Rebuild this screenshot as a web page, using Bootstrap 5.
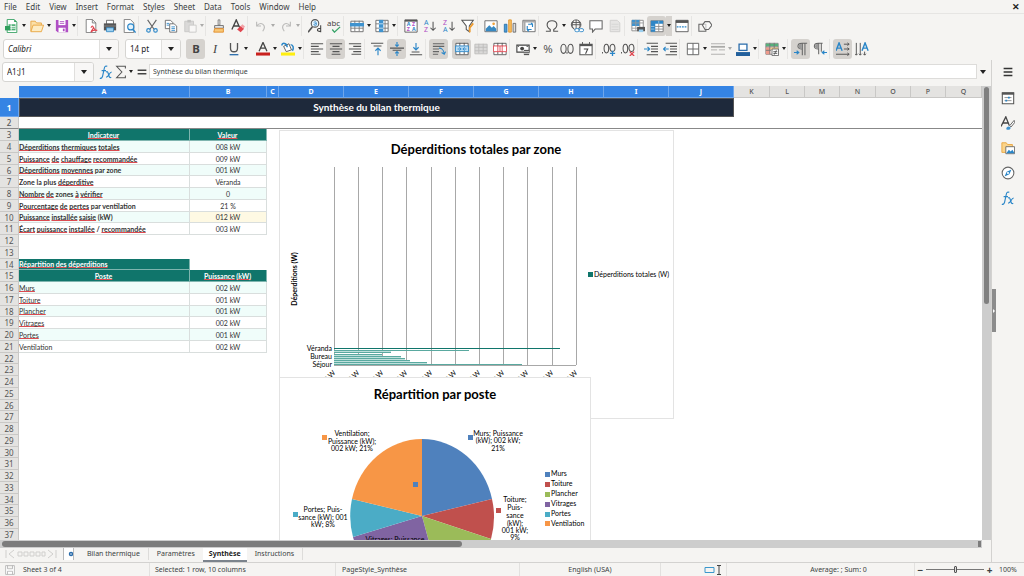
<!DOCTYPE html>
<html lang="fr">
<head>
<meta charset="utf-8">
<meta name="viewport" content="width=device-width, initial-scale=1">
<title>Bilan thermique – Synthèse</title>
<link href="https://cdn.jsdelivr.net/npm/bootstrap@5.3.0/dist/css/bootstrap.min.css" rel="stylesheet">
<script src="https://cdn.jsdelivr.net/npm/bootstrap@5.3.0/dist/js/bootstrap.bundle.min.js"></script>
<style>
  :root { --chrome:#f5f4f2; --line:#dddcda; --ink:#3b3f42; --pick:#3584e4; --teal:#10756b; --mint:#f0fdfa; }
  body { font-family:"Noto Sans",sans-serif; font-size:7px; line-height:10px; color:var(--ink); background:var(--chrome); }
  button, input { font:inherit; color:inherit; }
  svg { display:block; }

  .menubar { height:14px; font-size:8px; border-bottom:1px solid #e6e5e3; }
  .menubar .entries { gap:9px; }
  .menubar a { color:var(--ink); text-decoration:none; }
  .btn.winclose { font-size:9px; line-height:10px; color:#222; font-weight:bold; }

  .toolrow { height:23px; padding-left:2px; }
  .formatrow { padding-left:3px; }
  .btn.tool { width:19px; height:20px; padding:0; border:0; border-radius:3px; flex:none; display:flex; align-items:center; justify-content:center; }
  .btn.tool svg { width:14px; height:14px; }
  .btn.tool.active { background:#d5d2ce; }
  .btn.drop { width:6px; height:20px; padding:0; border:0; border-radius:0; flex:none; display:flex; align-items:center; justify-content:center; }
  .btn.drop::after { content:""; border:2px solid transparent; border-top:3px solid #222; border-bottom:0; }
  .btn.drop.active { background:#d5d2ce; }
  .btn:disabled { opacity:.35; border:0; }
  .rule { width:4px; height:20px; flex:none; border-left:1px solid #e6e5e3; }

  .combo { height:20px; background:#fff; border:1px solid #d6d5d2; border-radius:3px; overflow:hidden; flex:none; }
  .combo input { border:0; padding:0 4px; min-width:0; flex:1; font-size:8px; background:transparent; color:#222; }
  .combo button { width:19px; border:0; border-left:1px solid #e0dfdd; background:#f8f7f6; padding:0; display:flex; align-items:center; justify-content:center; }
  .combo button::after, .expand::after { content:""; border:3px solid transparent; border-top:4px solid #222; border-bottom:0; }
  .fontbox { width:116px; margin-right:6px; } .sizebox { width:56px; margin-right:5px; }
  .namebox { width:92px; } .namebox input { font-size:8px; }
  .formulabar { height:26px; padding:0 2px 3px 2px; }
  .formulabar .btn.tool { width:15px; }
  .formula { height:15px; border:1px solid var(--line); background:#fff; padding:0 3px; font-size:7px; min-width:0; }
  .expand { width:12px; border:0; background:none; padding:0; display:flex; justify-content:center; }
  .formulabar svg { width:12px; height:12px; }

  .sheet { background:#fff; min-height:0; overflow:hidden; }
  .grid { table-layout:fixed; border-collapse:separate; border-spacing:0; width:100%; font-family:Lato,sans-serif; font-size:7px; line-height:10px; color:#333; }
  .grid th, .grid td { padding:0 1px; overflow:hidden; white-space:nowrap; text-align:center; font-weight:normal; vertical-align:middle; }
  .grid tr { height:12px; }
  .grid .data tr:nth-child(4n) { height:11px; }
  .grid th[scope=row], .grid thead th { font-family:"Noto Sans",sans-serif; background:#e4e3e1; color:#555; border-right:1px solid #c9c8c6; border-bottom:1px solid #c9c8c6; }
  .grid th[scope=row] { font-size:8px; line-height:9px; padding:0; }
  .grid thead th { background:#e4e3e1; line-height:9px; font-weight:500; }
  .grid thead th.picked, .grid th.picked[scope=row] { background:var(--pick); color:#fff; border-color:#6ea6ec; font-weight:bold; }
  .grid thead td { background:var(--chrome); }
  .grid .titlerow { height:19px; }
  .grid .banner { background:#1e293b; color:#fff; font-size:10px; font-weight:bold; line-height:15px; border:1px solid #fff; border-top-color:#c9d8f0; outline:1px solid #555; outline-offset:-1px; }
  .grid .frozen > * { border-bottom:1px solid #888 !important; }
  .grid .lbl, .grid .val { border-right:1px solid #d9dedd; border-bottom:1px solid #d9dedd; }
  .grid .lbl, .grid .cap { padding-left:0; }
  .grid .lbl { text-align:left; font-weight:bold; }
  .grid .plain { font-weight:normal; }
  .grid .data .cap { background:var(--teal); color:#fff; font-weight:bold; border-right:1px solid #7fb5af; border-bottom:1px solid #7fb5af; }
  .grid .tint { background:var(--mint); }
  .grid .entry { background:#fef9e3; }
  .grid u { text-decoration:underline 1px #dc4a50; text-underline-offset:0; text-decoration-skip-ink:none; }

  .floatchart { position:absolute; left:279px; background:#fff; border:1px solid #e3e3e3; font-family:Lato,sans-serif; font-size:7px; }
  .zones { top:44px; } .postes { top:291px; }
  .floatchart .heading { font-size:13px; font-weight:bold; fill:#000; }

  .vscroll { width:9px; background:#cdcdcd; padding:1px 2px; }
  .vscroll div { height:48%; width:5px; background:#808080; border-radius:3px; }
  .hscroll { height:8px; background:#cdcdcd; padding:1px 1px 1px 2px; margin-right:9px; }
  .hscroll div { height:6px; background:#7c7c7c; border-radius:3px; }
  .hscroll .thumb { width:47%; } .hscroll .grip { width:3px; border-radius:0; }
  .tabs { height:14px; padding-left:5px; }
  .tabs a { color:var(--ink); text-decoration:none; padding:0 8px; line-height:12px; border-right:1px solid var(--line); }
  .tabs a.active { background:#fff; font-weight:bold; color:#222; border:0; border-bottom:2px solid #7b838c; padding:0 6px; }
  .tabs .addsheet { width:11px; height:12px; border:0; border-left:1px solid #bbb; border-right:1px solid #bbb; background:#fff; padding:0; display:flex; align-items:center; justify-content:end; margin:0 5px 0 6px; }

  .side { width:33px; border-left:1px solid #d3d2d0; padding-top:4px; position:relative; }
  .side .btn { width:20px; height:16px; padding:0; border:0; display:flex; align-items:center; justify-content:center; margin-bottom:9px; }
  .side .btn:first-child { margin-bottom:10px; }
  .side .btn svg { width:14px; height:14px; }
  .side .grabber { position:absolute; left:0; top:229px; width:4px; height:43px; background:#8c8c8c; }

  .statusbar { height:14px; border-top:1px solid #d3d2d0; line-height:13px; }
  .statusbar > div { border-right:1px solid #e2e1df; height:13px; flex:none; }
  .statusbar > div:last-child { border:0; }
  .s-sheet { width:150px; padding-left:5px; } .s-sel { width:186px; padding-left:5px; } .s-page { width:184px; padding-left:6px; }
  .s-lang { width:141px; } .statusbar > .s-mode { width:66px; padding-right:4px; } .s-zoom { width:109px; }
  .statusbar .s-sum { flex:1; padding-left:36px; }
  .zoomrange { appearance:none; width:58px; height:1px; background:#777; margin:0; }
  .zoomrange::-webkit-slider-thumb { appearance:none; width:3px; height:7px; background:#ddd; border:1px solid #555; border-radius:1px; }
  .s-zoom button { border:0; background:none; padding:0; width:11px; font-size:10px; line-height:10px; font-weight:bold; }
</style>
</head>
<body class="vh-100 overflow-hidden d-flex flex-column">

<svg width="0" height="0" class="position-absolute" aria-hidden="true">
  <defs>
    <symbol id="i-new" viewBox="0 0 16 16"><path d="M2.500.5h8l3 3v12h-11z" fill="#fff" stroke="#2e9e5b"/><path d="M10.500.5v3h3z" fill="#2e9e5b"/><path d="M4 6h8v7H4z" fill="#4cae74"/><path d="M4 8.500h8M4 10.500h8M7 6v7" stroke="#fff"/><path d="M0 8h6v5H0z" fill="#2e9e5b"/></symbol>
    <symbol id="i-open" viewBox="0 0 16 16"><path d="M1 14V2.500h5l1.500 2H13V7" fill="#fbe0a8" stroke="#e8a33d"/><path d="M1 14.500 3.500 7h12L13 14.500z" fill="#fdecc4" stroke="#e8a33d"/></symbol>
    <symbol id="i-save" viewBox="0 0 16 16"><path d="M1 1h14v14H3l-2-2z" fill="#b04fc4"/><path d="M4 1h8v6H4z" fill="#fff"/><path d="M5.500 3h5M5.500 5h5" stroke="#b04fc4"/><path d="M4 10h8v5H4z" fill="#fff"/><path d="M9 11h2v3H9z" fill="#b04fc4"/></symbol>
    <symbol id="i-pdf" viewBox="0 0 16 16"><path d="M2.500.5h7l4 4v11h-11z" fill="#fff" stroke="#777"/><path d="M9.500.5v4h4" fill="none" stroke="#777"/><path d="M8 10c3-6 2 4 7 3-5-1-6 1-7 2 1-3 3-4 3-6" fill="none" stroke="#e0454f" stroke-width="1.300"/></symbol>
    <symbol id="i-print" viewBox="0 0 16 16"><path d="M4 1.500h8V6H4z" fill="#fff" stroke="#666"/><path d="M1 5h14v8H1z" fill="#555"/><path d="M1 8h14" stroke="#888"/><path d="M4 10h8v4.500H4z" fill="#9cd0f0" stroke="#3789c2"/></symbol>
    <symbol id="i-preview" viewBox="0 0 16 16"><path d="M2.500.5h7l4 4v11h-11z" fill="#fff" stroke="#777"/><circle cx="10" cy="9" r="3.500" fill="#e3f2fb" stroke="#2a86c8" stroke-width="1.300"/><path d="m12.500 12 3 3.500" stroke="#2a86c8" stroke-width="1.500"/></symbol>
    <symbol id="i-cut" viewBox="0 0 16 16"><path d="m3 1 7.500 11M13 1 5.500 12" stroke="#666" stroke-width="1.300"/><circle cx="4" cy="13" r="2" fill="none" stroke="#2a86c8" stroke-width="1.300"/><circle cx="12" cy="13" r="2" fill="none" stroke="#2a86c8" stroke-width="1.300"/></symbol>
    <symbol id="i-copy" viewBox="0 0 16 16"><path d="M1.500 1.500h6l2.500 2.500v7H1.500z" fill="#fff" stroke="#666"/><path d="M6.500 5.500h5L14.500 8v7h-8z" fill="#fff" stroke="#666"/><path d="M3 5h3M3 7h3M8.500 9h4M8.500 11h4M8.500 13h4" stroke="#2a86c8"/></symbol>
    <symbol id="i-paste" viewBox="0 0 16 16"><path d="M2 2.500h10v12H2z" fill="#aaa" stroke="#777"/><path d="M5 1h4v3H5z" fill="#666"/><path d="M7 7h8v8H7z" fill="#fff" stroke="#777"/></symbol>
    <symbol id="i-clone" viewBox="0 0 16 16"><path d="M7 1h2v6H7z" fill="#fff" stroke="#777"/><path d="M3 7.500h10v3H3z" fill="#eee" stroke="#666"/><path d="m3 11-1 4h11V11z" fill="#f9c877" stroke="#e08a28"/></symbol>
    <symbol id="i-clear" viewBox="0 0 16 16"><path d="M1 12 6 1l4 9M3 8h6" fill="none" stroke="#444" stroke-width="1.500"/><path d="m7 12 4-4 4 3-4 4z" fill="#e0454f"/><path d="m11 8 2-2 3 2.500-2 2.500z" fill="#f3a2a7"/></symbol>
    <symbol id="i-undo" viewBox="0 0 16 16"><path d="M3 3v5h5M3 8c5-6 12-1 7 6" fill="none" stroke="#555" stroke-width="1.300"/></symbol>
    <symbol id="i-redo" viewBox="0 0 16 16"><path d="M13 3v5H8m5 0C8 2 1 7 6 14" fill="none" stroke="#555" stroke-width="1.300"/></symbol>
    <symbol id="i-find" viewBox="0 0 16 16"><circle cx="8" cy="5" r="4.300" fill="#e8f4fc" stroke="#555" stroke-width="1.200"/><path d="m5 9-5 6" stroke="#555" stroke-width="1.800"/><path d="M6.500 4c3-2 3 0 3 3-4 1-3-2 0-2" fill="none" stroke="#2a86c8"/><path d="M14.500 7v8M14.500 11c-5-1-5 4 0 3" fill="none" stroke="#444" stroke-width="1.200"/></symbol>
    <symbol id="i-spell" viewBox="0 0 16 16"><text x="0" y="8" font-size="9" fill="#444" font-family="Noto Sans">abc</text><path d="m6 12 2.500 3L15 9" fill="none" stroke="#36a367" stroke-width="1.500"/></symbol>
    <symbol id="i-row" viewBox="0 0 16 16"><path d="M1 2.500h14v12H1z" fill="#fff" stroke="#666"/><path d="M1 10.500h14M5.500 2v12M10.500 2v12" stroke="#777"/><path d="M0 4.500h16v4H0z" fill="#3f93cf"/></symbol>
    <symbol id="i-col" viewBox="0 0 16 16"><path d="M1 1.500h14v13H1z" fill="#fff" stroke="#666"/><path d="M1 5.500h14M1 10.500h14M11.500 2v12" stroke="#777"/><path d="M4.500 1h5v14h-5z" fill="#3f93cf"/><path d="M4.500 5.500h5M4.500 10.500h5" stroke="#cfe5f5"/></symbol>
    <symbol id="i-sort" viewBox="0 0 16 16"><path d="M1 1h14v14H1z" fill="#fff" stroke="#555"/><path d="M1 2h14" stroke="#555" stroke-width="2"/><text font-size="6" font-weight="bold" font-family="Noto Sans"><tspan x="3" y="8.500" fill="#2a86c8">A</tspan><tspan x="9" y="8.500" fill="#b04fc4">Z</tspan><tspan x="3" y="14" fill="#b04fc4">Z</tspan><tspan x="9" y="14" fill="#2a86c8">A</tspan></text></symbol>
    <symbol id="i-asc" viewBox="0 0 16 16"><text font-size="8" font-family="Noto Sans"><tspan x="1" y="7" fill="#2a86c8">A</tspan><tspan x="1" y="15" fill="#b04fc4">Z</tspan></text><path d="M11.500 3v10m-3-3 3 3 3-3" fill="none" stroke="#555" stroke-width="1.200"/></symbol>
    <symbol id="i-desc" viewBox="0 0 16 16"><text font-size="8" font-family="Noto Sans"><tspan x="1" y="7" fill="#b04fc4">Z</tspan><tspan x="1" y="15" fill="#2a86c8">A</tspan></text><path d="M11.500 3v10m-3-3 3 3 3-3" fill="none" stroke="#555" stroke-width="1.200"/></symbol>
    <symbol id="i-filter" viewBox="0 0 16 16"><path d="M1 1.500h13L9.500 8v6.500L6 12V8z" fill="#fff" stroke="#555" stroke-width="1.200"/><path d="m14 5-4 5v5" fill="none" stroke="#ee9b2d" stroke-width="2"/></symbol>
    <symbol id="i-image" viewBox="0 0 16 16"><path d="M1 2h14v12.500H1z" fill="#fff" stroke="#666"/><circle cx="11" cy="5.500" r="1.500" fill="#f0a23a"/><path d="M2 14v-3l4-4 3 3 2-2 3 3v3z" fill="#3789c2"/></symbol>
    <symbol id="i-chart" viewBox="0 0 16 16"><path d="M1.500 6h3v9h-3z" fill="#4b9cd6" stroke="#2a70a8"/><path d="M6.500 1h3v14h-3z" fill="#f7bf61" stroke="#e0952d"/><path d="M11.500 5h3v10h-3z" fill="#ddd" stroke="#666"/></symbol>
    <symbol id="i-pivot" viewBox="0 0 16 16"><path d="M1 1.500h14v13H1z" fill="#fff" stroke="#666"/><path d="M1 3h14M3 2v12" stroke="#aaa" stroke-width="2"/><path d="M6 8v4h5M12 9V6H7m5 0-1.500-1.500M6 12.500 8 14" fill="none" stroke="#2a86c8" stroke-width="1.300"/></symbol>
    <symbol id="i-omega" viewBox="0 0 16 16"><path d="M1 14h5v-2C1 9 1 2 8 2s7 7 2 10v2h5" fill="none" stroke="#555" stroke-width="1.300"/></symbol>
    <symbol id="i-link" viewBox="0 0 16 16"><circle cx="7" cy="6.500" r="5.500" fill="none" stroke="#555"/><path d="M1.500 6.500h11M7 1v11M4 2c-2 3-2 6 0 9M10 2c2 3 2 6 0 9M2 4h10" fill="none" stroke="#555"/><rect x="5.500" y="11" width="5" height="3.500" rx="1.700" fill="#fff" stroke="#2a86c8"/><rect x="10.500" y="11" width="5" height="3.500" rx="1.700" fill="#fff" stroke="#2a86c8"/></symbol>
    <symbol id="i-comment" viewBox="0 0 16 16"><path d="M1 2h14v9.500H7L4 15v-3.500H1z" fill="#fff" stroke="#666" stroke-width="1.200"/></symbol>
    <symbol id="i-head" viewBox="0 0 16 16"><path d="M2.500 1.500h8l3 3v10h-11z" fill="#ccc" stroke="#888"/><path d="M4 6h8M4 9h8M4 12h8" stroke="#999"/></symbol>
    <symbol id="i-area" viewBox="0 0 16 16"><path d="M1 1.500h13v12H1z" fill="#fff" stroke="#888"/><path d="M1 1h9v7H1z" fill="#3f93cf"/><path d="M1 4.500h13M5.500 1v12M10 1v12M1 10.500h8" stroke="#999"/><path d="M7 9h9v5H7z" fill="#555"/><path d="M9 12h5v3H9z" fill="#9cd0f0"/></symbol>
    <symbol id="i-freeze" viewBox="0 0 16 16"><path d="M1 2h14v12.500H1z" fill="#fff" stroke="#777"/><path d="M1 2h14v3.500H6v9H1z" fill="#2f86c6"/><path d="M5.500 8.500H15M5.500 11.500H15M10 5v9" stroke="#888"/><path d="M1 8.500h4M1 11.500h4M10 2v3" stroke="#9cc8e6"/></symbol>
    <symbol id="i-split" viewBox="0 0 16 16"><path d="M1 1.500h14v13H1z" fill="#fff" stroke="#555"/><path d="M1 3h14" stroke="#555" stroke-width="3"/><path d="M2 9h12" stroke="#2a86c8" stroke-width="1.200" stroke-dasharray="2 1"/></symbol>
    <symbol id="i-shapes" viewBox="0 0 16 16"><path d="M1 6h8v8H1z" fill="none" stroke="#666" stroke-width="1.200"/><path d="M8 3h5l3 4-4 5H8L5 7z" fill="#fff" fill-opacity=".6" stroke="#666" stroke-width="1.200"/></symbol>

    <symbol id="i-left" viewBox="0 0 16 16"><path d="M1 2h14M1 5h9M1 8h14M1 11h9M1 14h11" stroke="#555" stroke-width="1.200"/></symbol>
    <symbol id="i-center" viewBox="0 0 16 16"><path d="M1 2h14M4 5h8M1 8h14M4 11h8M3 14h10" stroke="#555" stroke-width="1.200"/></symbol>
    <symbol id="i-right" viewBox="0 0 16 16"><path d="M1 2h14M6 5h9M1 8h14M6 11h9M4 14h11" stroke="#555" stroke-width="1.200"/></symbol>
    <symbol id="i-top" viewBox="0 0 16 16"><path d="M0 1.500h14M3 4.500h9" stroke="#555" stroke-width="1.200"/><path d="M8 15V7m-3 3 3-3 3 3" fill="none" stroke="#2a86c8" stroke-width="1.300"/></symbol>
    <symbol id="i-mid" viewBox="0 0 16 16"><path d="M0 7h16M3 9.500h10" stroke="#555" stroke-width="1.200"/><path d="M8 0v5M6 3l2 2 2-2M8 16v-5m-2 2 2-2 2 2" fill="none" stroke="#2a86c8" stroke-width="1.300"/></symbol>
    <symbol id="i-bot" viewBox="0 0 16 16"><path d="M3 11.500h9M1 14.500h14" stroke="#555" stroke-width="1.200"/><path d="M8 1v8M5 6l3 3 3-3" fill="none" stroke="#2a86c8" stroke-width="1.300"/></symbol>
    <symbol id="i-wrap" viewBox="0 0 16 16"><path d="M1 2h13M1 5h13M1 8h7M1 11h7M1 14h6" stroke="#666" stroke-width="1.200"/><path d="M8 7c4 0 5 2 6 6m-3-1 3 2 1.500-3" fill="none" stroke="#2a86c8" stroke-width="1.200"/></symbol>
    <symbol id="i-merge" viewBox="0 0 16 16"><path d="M1 1.500h14v13H1zM5.500 1v13M10.500 1v13" fill="#fff" stroke="#555"/><path d="M.5 4.500h15v6.500H.5z" fill="#b9dcf3" stroke="#2a86c8"/><path d="M3 8h4M9 8h4M5 6l2 2-2 2M11 6 9 8l2 2" fill="none" stroke="#2a86c8"/></symbol>
    <symbol id="i-mcells" viewBox="0 0 16 16"><path d="M1 2.500h14v11H1zM5.500 2v11M10.500 2v11M1 6h14M1 10h14" fill="#aaa" stroke="#555"/></symbol>
    <symbol id="i-unmerge" viewBox="0 0 16 16"><path d="M1 1.500h14v13H1zM5.500 1v13M10.500 1v13" fill="#fff" stroke="#555"/><path d="M.5 4.500h15v6.500H.5zM5.500 4.500V11M10.500 4.500V11M8 4.500V11" fill="#fff" stroke="#e0454f"/></symbol>
    <symbol id="i-money" viewBox="0 0 16 16"><path d="M1 3.500h14v8H1z" fill="#fff" stroke="#444" stroke-width="1.300"/><circle cx="7" cy="7.500" r="2.200" fill="#444"/><path d="M2 5h1.500M12 5h2" stroke="#444"/><path d="M9 9h6v6H9z" fill="#555"/><path d="M9 11h6M9 13h6" stroke="#ddd"/></symbol>
    <symbol id="i-date" viewBox="0 0 16 16"><path d="M1 2.500h14v12H1z" fill="#fff" stroke="#555" stroke-width="1.200"/><path d="M1 3.500h14" stroke="#555" stroke-width="2.500"/><path d="M5.500 8H10l-2.500 5.500" fill="none" stroke="#444" stroke-width="1.200"/><path d="M4 0v3M12 0v3" stroke="#555"/></symbol>
    <symbol id="i-indent" viewBox="0 0 16 16"><path d="M3 1.500h13M8 5h8M8 8h8M8 11h8M3 14.500h13" stroke="#555" stroke-width="1.200"/><path d="M0 8h6M4 5.500 6.500 8 4 10.500" fill="none" stroke="#2a86c8" stroke-width="1.300"/></symbol>
    <symbol id="i-outdent" viewBox="0 0 16 16"><path d="M3 1.500h13M8 5h8M8 8h8M8 11h8M3 14.500h13" stroke="#555" stroke-width="1.200"/><path d="M6.500 8h-6M3 5.500.5 8 3 10.500" fill="none" stroke="#2a86c8" stroke-width="1.300"/></symbol>
    <symbol id="i-borders" viewBox="0 0 16 16"><path d="M1.500 1.500h13v13h-13zM8 1.500v13M1.500 8h13" fill="#fff" stroke="#666" stroke-width="1.100"/></symbol>
    <symbol id="i-lines" viewBox="0 0 16 16"><path d="M0 2h16M0 9h7M9 9h7M0 14h16" stroke="#222"/><path d="M0 5.500h16" stroke="#222" stroke-width="2"/></symbol>
    <symbol id="i-bcolor" viewBox="0 0 16 16"><path d="M3.500 2.500h9v7h-9z" fill="#fff" stroke="#2a6cab" stroke-width="1.500"/><path d="M0 11.500h16V16H0z" fill="#23609c"/></symbol>
    <symbol id="i-cond" viewBox="0 0 16 16"><path d="M1 1.500h14V14H1z" fill="#fff" stroke="#777"/><path d="M1 2h14v3H1z" fill="#55b27b"/><path d="M1 6h5v8H1z" fill="#ee9a8c"/><path d="M6 6h9v3H6z" fill="#f6c98a"/><path d="M5.500 1v13M10.500 1v6M1 5.500h14M1 9.500h6" stroke="#777"/><path d="M8 8h7.500v7.500H8z" fill="#fff" stroke="#666"/><path d="M9.500 11h4.500M9.500 13h4.500M13 9.500l-2.500 5" stroke="#555"/></symbol>
    <symbol id="i-ltr" viewBox="0 0 16 16"><path d="M9 8C3 8 3 1.500 9 1.500h6M9.500 2v13M12.500 2v13" fill="none" stroke="#666" stroke-width="1.200"/><path d="M9 8C4 8 4 2 9 2z" fill="#999"/><path d="M0 12h5M3 10l2.500 2L3 14" fill="none" stroke="#2a86c8" stroke-width="1.200"/></symbol>
    <symbol id="i-rtl" viewBox="0 0 16 16"><path d="M6 8C0 8 0 1.500 6 1.500h5M6.500 2v12M9.500 2v9" fill="none" stroke="#666" stroke-width="1.200"/><path d="M6 8C1 8 1 2 6 2z" fill="#999"/><path d="M16 12h-5m2-2-2.500 2 2.500 2" fill="none" stroke="#2a86c8" stroke-width="1.200"/></symbol>
    <symbol id="i-horiz" viewBox="0 0 16 16"><path d="m0 10 3.500-9L7 10M1.500 7h4" fill="none" stroke="#2a86c8" stroke-width="1.600"/><path d="M9 2.500h6M9 8h6M0 14h15M13 1l2 1.500L13 4M13 6.500 15 8l-2 1.500M13 12.500l2 1.500-2 1.500" fill="none" stroke="#555" stroke-width="1.100"/></symbol>
    <symbol id="i-vert" viewBox="0 0 16 16"><path d="m8 10 3.500-9L15 10M9.500 7h4" fill="none" stroke="#2a86c8" stroke-width="1.600"/><path d="M1.500 1v14M6 1v14M11 11v4M0 13.500 1.500 15 3 13.500M4.500 13.500 6 15l1.500-1.500M9.500 13.500 11 15l1.500-1.500" fill="none" stroke="#555" stroke-width="1.100"/></symbol>
    <symbol id="i-ink" viewBox="0 0 16 16"><path d="M3.500 10.500 8 .5l4.500 10M5 7h6" fill="none" stroke="#444" stroke-width="1.500"/><path d="M0 12h16v3.500H0z" fill="#c9211e"/></symbol>
    <symbol id="i-fill" viewBox="0 0 16 16"><path d="M3 5 9 2l3 7-6 2z" fill="#fff" stroke="#555"/><path d="M1 4c0-4 6-3 6 2M11 3c3 0 4 4 2 7" fill="none" stroke="#2a86c8" stroke-width="1.700"/><path d="M0 12h16v3.500H0z" fill="#ffee10"/></symbol>

    <symbol id="i-props" viewBox="0 0 16 16"><path d="M1.500 2h13v12.500h-13z" fill="#fff" stroke="#555" stroke-width="1.200"/><path d="M1 3h14" stroke="#555" stroke-width="2.500"/><path d="M4 7.500h8M4 11h8" stroke="#888"/><path d="M9 6.500v2M6 10v2" stroke="#2a86c8" stroke-width="2"/></symbol>
    <symbol id="i-style" viewBox="0 0 16 16"><path d="M0 12 5.500 1l4 10M2 8h7" fill="none" stroke="#444" stroke-width="1.500"/><path d="m15 5-5 6 1.500 1.500L16 7z" fill="#fff" stroke="#555"/><path d="M6 15c0-3 3-4 5-2 0 3-3 3-5 2z" fill="#3f93cf"/></symbol>
    <symbol id="i-gallery" viewBox="0 0 16 16"><path d="M1 13V2h5l1.500 2H13v9z" fill="#fbd48a" stroke="#e8a33d"/><path d="M5.500 6.500h10v8h-10z" fill="#fff" stroke="#666"/><path d="m6 14 3-4 2 2 2-2 2.500 4z" fill="#2a86c8"/></symbol>
    <symbol id="i-nav" viewBox="0 0 16 16"><circle cx="8" cy="8" r="6.700" fill="#fff" stroke="#666" stroke-width="1.200"/><path d="M12 4 9.500 9.500 4 12l2.500-5.500z" fill="#2a86c8"/><circle cx="8" cy="8" r="1.200" fill="#fff"/></symbol>
    <symbol id="i-fx" viewBox="0 0 16 16"><path d="M1 15c2 1 3-1 3.500-4L6 4c.5-3 2-3 3.500-2.500M3 6.500h5M8 8c2-1 2 0 3 3s1 4 3 3M14.500 8c-3 0-3 6-6.500 6" fill="none" stroke="#2a86c8" stroke-width="1.300"/></symbol>
    <symbol id="i-sum" viewBox="0 0 16 16"><path d="M13 4V1.500H3L9 8l-6 6.500h10V12" fill="none" stroke="#555" stroke-width="1.200"/></symbol>
    <symbol id="i-burger" viewBox="0 0 16 16"><path d="M3 4h10M3 8h10M3 12h10" stroke="#333" stroke-width="1.800"/></symbol>
    <symbol id="i-disk" viewBox="0 0 16 16"><path d="M1 1h14v14H1zM4 1v5h8V1M4 15v-5h8v5" fill="#fff" stroke="#aaa" stroke-width="1.200"/></symbol>
  </defs>
</svg>

<nav class="menubar d-flex align-items-center flex-shrink-0" aria-label="Menu">
  <div class="entries d-flex flex-grow-1 ps-1">
    <a href="#">File</a><a href="#">Edit</a><a href="#">View</a><a href="#">Insert</a><a href="#">Format</a><a href="#">Styles</a><a href="#">Sheet</a><a href="#">Data</a><a href="#">Tools</a><a href="#">Window</a><a href="#">Help</a>
  </div>
  <button class="btn winclose p-0 border-0 me-1" aria-label="Close">✕</button>
</nav>

<div class="toolrow d-flex align-items-center flex-shrink-0" role="toolbar" aria-label="Standard">
  <button class="btn tool" aria-label="New"><svg><use href="#i-new"/></svg></button><button class="btn drop" aria-label="New options"></button>
  <button class="btn tool" aria-label="Open"><svg><use href="#i-open"/></svg></button><button class="btn drop" aria-label="Open options"></button>
  <button class="btn tool" aria-label="Save"><svg><use href="#i-save"/></svg></button><button class="btn drop" aria-label="Save options"></button>
  <span class="rule"></span>
  <button class="btn tool" aria-label="Export PDF"><svg><use href="#i-pdf"/></svg></button>
  <button class="btn tool" aria-label="Print"><svg><use href="#i-print"/></svg></button>
  <button class="btn tool" aria-label="Print preview"><svg><use href="#i-preview"/></svg></button>
  <span class="rule"></span>
  <button class="btn tool" aria-label="Cut"><svg><use href="#i-cut"/></svg></button>
  <button class="btn tool" aria-label="Copy"><svg><use href="#i-copy"/></svg></button>
  <button class="btn tool" aria-label="Paste" disabled><svg><use href="#i-paste"/></svg></button><button class="btn drop" aria-label="Paste options" disabled></button>
  <span class="rule"></span>
  <button class="btn tool" aria-label="Clone formatting"><svg><use href="#i-clone"/></svg></button>
  <button class="btn tool" aria-label="Clear formatting"><svg><use href="#i-clear"/></svg></button>
  <span class="rule"></span>
  <button class="btn tool" aria-label="Undo" disabled><svg><use href="#i-undo"/></svg></button><button class="btn drop" aria-label="Undo list" disabled></button>
  <button class="btn tool" aria-label="Redo" disabled><svg><use href="#i-redo"/></svg></button><button class="btn drop" aria-label="Redo list" disabled></button>
  <span class="rule"></span>
  <button class="btn tool" aria-label="Find and replace"><svg><use href="#i-find"/></svg></button>
  <button class="btn tool" aria-label="Spelling"><svg><use href="#i-spell"/></svg></button>
  <span class="rule"></span>
  <button class="btn tool" aria-label="Row"><svg><use href="#i-row"/></svg></button><button class="btn drop" aria-label="Row options"></button>
  <button class="btn tool" aria-label="Column"><svg><use href="#i-col"/></svg></button><button class="btn drop" aria-label="Column options"></button>
  <span class="rule"></span>
  <button class="btn tool" aria-label="Sort"><svg><use href="#i-sort"/></svg></button>
  <button class="btn tool" aria-label="Sort ascending"><svg><use href="#i-asc"/></svg></button>
  <button class="btn tool" aria-label="Sort descending"><svg><use href="#i-desc"/></svg></button>
  <button class="btn tool" aria-label="AutoFilter"><svg><use href="#i-filter"/></svg></button>
  <span class="rule"></span>
  <button class="btn tool" aria-label="Image"><svg><use href="#i-image"/></svg></button>
  <button class="btn tool" aria-label="Chart"><svg><use href="#i-chart"/></svg></button>
  <button class="btn tool" aria-label="Pivot table"><svg><use href="#i-pivot"/></svg></button>
  <span class="rule"></span>
  <button class="btn tool" aria-label="Special character"><svg><use href="#i-omega"/></svg></button><button class="btn drop" aria-label="Character list"></button>
  <button class="btn tool" aria-label="Hyperlink"><svg><use href="#i-link"/></svg></button>
  <button class="btn tool" aria-label="Comment"><svg><use href="#i-comment"/></svg></button>
  <button class="btn tool" aria-label="Headers and footers" disabled><svg><use href="#i-head"/></svg></button>
  <span class="rule"></span>
  <button class="btn tool" aria-label="Define print area"><svg><use href="#i-area"/></svg></button>
  <button class="btn tool active" aria-label="Freeze rows and columns"><svg><use href="#i-freeze"/></svg></button><button class="btn drop active" aria-label="Freeze options"></button>
  <button class="btn tool" aria-label="Split window"><svg><use href="#i-split"/></svg></button>
  <span class="rule"></span>
  <button class="btn tool" aria-label="Draw functions"><svg><use href="#i-shapes"/></svg></button>
</div>

<div class="toolrow formatrow d-flex align-items-center flex-shrink-0" role="toolbar" aria-label="Formatting">
  <div class="combo fontbox d-flex"><input class="fst-italic" type="text" value="Calibri" aria-label="Font name"><button aria-label="Font list"></button></div>
  <div class="combo sizebox d-flex"><input type="text" value="14 pt" aria-label="Font size"><button aria-label="Size list"></button></div>
  <button class="btn tool active" aria-label="Bold"><svg viewBox="0 0 16 16"><text x="8" y="13" text-anchor="middle" font-size="13" font-weight="bold" fill="#444">B</text></svg></button>
  <button class="btn tool" aria-label="Italic"><svg viewBox="0 0 16 16"><text x="8" y="13" text-anchor="middle" font-size="14" font-style="italic" font-family="Liberation Serif" fill="#444">I</text></svg></button>
  <button class="btn tool" aria-label="Underline"><svg viewBox="0 0 16 16"><path d="M4 1v6c0 5.500 8 5.500 8 0V1" fill="none" stroke="#555" stroke-width="1.500"/><path d="M3 14.500h10" stroke="#2a6cab" stroke-width="1.500"/></svg></button><button class="btn drop" aria-label="Underline options"></button>
  <span class="rule border-0"></span>
  <button class="btn tool" aria-label="Font colour"><svg><use href="#i-ink"/></svg></button><button class="btn drop" aria-label="Font colour list"></button>
  <button class="btn tool" aria-label="Highlighting"><svg><use href="#i-fill"/></svg></button><button class="btn drop" aria-label="Highlighting list"></button>
  <span class="rule"></span>
  <button class="btn tool" aria-label="Align left"><svg><use href="#i-left"/></svg></button>
  <button class="btn tool active" aria-label="Align centre"><svg><use href="#i-center"/></svg></button>
  <button class="btn tool" aria-label="Align right"><svg><use href="#i-right"/></svg></button>
  <span class="rule"></span>
  <button class="btn tool" aria-label="Align top"><svg><use href="#i-top"/></svg></button>
  <button class="btn tool active" aria-label="Centre vertically"><svg><use href="#i-mid"/></svg></button>
  <button class="btn tool" aria-label="Align bottom"><svg><use href="#i-bot"/></svg></button>
  <span class="rule"></span>
  <button class="btn tool active" aria-label="Wrap text"><svg><use href="#i-wrap"/></svg></button>
  <span class="rule border-0"></span>
  <button class="btn tool active" aria-label="Merge and centre"><svg><use href="#i-merge"/></svg></button>
  <button class="btn tool" aria-label="Merge cells" disabled><svg><use href="#i-mcells"/></svg></button>
  <button class="btn tool" aria-label="Unmerge cells"><svg><use href="#i-unmerge"/></svg></button>
  <span class="rule"></span>
  <button class="btn tool" aria-label="Currency"><svg><use href="#i-money"/></svg></button><button class="btn drop" aria-label="Currency list"></button>
  <button class="btn tool" aria-label="Percent"><svg viewBox="0 0 16 16"><text x="8" y="13" text-anchor="middle" font-size="13" fill="#555">%</text></svg></button>
  <button class="btn tool" aria-label="Number"><svg viewBox="0 0 16 16"><path d="M4 2.500c4 0 4 10.500 0 10.500s-4-10.500 0-10.500zM12 2.500c4 0 4 10.500 0 10.500s-4-10.500 0-10.500zM8 11.500v2" fill="none" stroke="#555" stroke-width="1.200"/></svg></button>
  <button class="btn tool" aria-label="Date"><svg><use href="#i-date"/></svg></button>
  <span class="rule"></span>
  <button class="btn tool" aria-label="Add decimal place"><svg viewBox="0 0 16 16"><path d="M5 2.500c3.500 0 3.500 10 0 10s-3.500-10 0-10zM12 2.500c3.500 0 3.500 8 1 8-5 2-5-8-1-8zM.5 11.500v1.500" fill="none" stroke="#555" stroke-width="1.200"/><path d="M9 13h6M12 10v6" stroke="#2a86c8" stroke-width="1.500"/></svg></button>
  <button class="btn tool" aria-label="Delete decimal place"><svg viewBox="0 0 16 16"><path d="M5 2.500c3.500 0 3.500 10 0 10s-3.500-10 0-10zM12 2.500c3.500 0 3.500 8 1 8-5 2-5-8-1-8zM.5 11.500v1.500" fill="none" stroke="#555" stroke-width="1.200"/><path d="m10 11 5 5m0-5-5 5" stroke="#e0454f" stroke-width="1.500"/></svg></button>
  <span class="rule"></span>
  <button class="btn tool" aria-label="Increase indent"><svg><use href="#i-indent"/></svg></button>
  <button class="btn tool" aria-label="Decrease indent"><svg><use href="#i-outdent"/></svg></button>
  <span class="rule"></span>
  <button class="btn tool" aria-label="Borders"><svg><use href="#i-borders"/></svg></button><button class="btn drop" aria-label="Border list"></button>
  <button class="btn tool" aria-label="Border style" disabled><svg><use href="#i-lines"/></svg></button><button class="btn drop" aria-label="Border style list" disabled></button>
  <button class="btn tool" aria-label="Border colour"><svg><use href="#i-bcolor"/></svg></button><button class="btn drop" aria-label="Border colour list"></button>
  <span class="rule"></span>
  <button class="btn tool" aria-label="Conditional formatting"><svg><use href="#i-cond"/></svg></button><button class="btn drop" aria-label="Conditional list"></button>
  <span class="rule"></span>
  <button class="btn tool active" aria-label="Left to right"><svg><use href="#i-ltr"/></svg></button>
  <button class="btn tool" aria-label="Right to left"><svg><use href="#i-rtl"/></svg></button>
  <span class="rule"></span>
  <button class="btn tool active" aria-label="Horizontal text"><svg><use href="#i-horiz"/></svg></button>
  <button class="btn tool" aria-label="Vertical text"><svg><use href="#i-vert"/></svg></button>
</div>

<main class="d-flex flex-grow-1 overflow-hidden">
  <div class="d-flex flex-column flex-grow-1 overflow-hidden">
    <div class="formulabar d-flex align-items-center flex-shrink-0">
      <div class="combo namebox d-flex"><input type="text" value="A1:J1" aria-label="Name box"><button aria-label="Name list"></button></div>
      <button class="btn tool ms-1" aria-label="Function wizard"><svg><use href="#i-fx"/></svg></button>
      <button class="btn tool" aria-label="Sum"><svg><use href="#i-sum"/></svg></button><button class="btn drop" aria-label="Function list"></button>
      <button class="btn tool" aria-label="Formula"><svg viewBox="0 0 16 16"><path d="M3 6h10M3 10h10" stroke="#444" stroke-width="1.600"/></svg></button>
      <input class="formula flex-grow-1" type="text" value="Synthèse du bilan thermique" aria-label="Input line">
      <button class="expand" aria-label="Expand formula bar"></button>
    </div>

    <div class="d-flex flex-grow-1 overflow-hidden">
      <div class="sheet flex-grow-1 position-relative">
        <table class="grid">
          <colgroup>
            <col style="width:19px"><col style="width:171px"><col style="width:77px"><col style="width:12px">
            <col span="7" style="width:65px"><col style="width:36px"><col style="width:35px"><col style="width:35px"><col style="width:36px"><col style="width:35px"><col style="width:35px"><col>
          </colgroup>
          <thead>
            <tr><td></td><th class="picked">A</th><th class="picked">B</th><th class="picked">C</th><th class="picked">D</th><th class="picked">E</th><th class="picked">F</th><th class="picked">G</th><th class="picked">H</th><th class="picked">I</th><th class="picked">J</th><th>K</th><th>L</th><th>M</th><th>N</th><th>O</th><th>P</th><th>Q</th></tr>
            <tr class="titlerow"><th scope="row" class="picked">1</th><td class="banner" colspan="10">Synthèse du bilan thermique</td><td class="bg-white" colspan="7"></td></tr>
            <tr class="frozen"><th scope="row">2</th><td class="bg-white" colspan="17"></td></tr>
          </thead>
          <tbody class="data">
            <tr><th scope="row">3</th><td class="cap"><u>Indicateur</u></td><td class="cap"><u>Valeur</u></td></tr>
            <tr><th scope="row">4</th><td class="lbl tint"><u>Déperditions</u> <u>thermiques</u> <u>totales</u></td><td class="val tint">008 kW</td></tr>
            <tr><th scope="row">5</th><td class="lbl"><u>Puissance</u> <u>de</u> <u>chauffage</u> <u>recommandée</u></td><td class="val">009 kW</td></tr>
            <tr><th scope="row">6</th><td class="lbl tint"><u>Déperditions</u> <u>moyennes</u> par zone</td><td class="val tint">001 kW</td></tr>
            <tr><th scope="row">7</th><td class="lbl">Zone la plus <u>déperditive</u></td><td class="val">Véranda</td></tr>
            <tr><th scope="row">8</th><td class="lbl tint"><u>Nombre</u> <u>de</u> zones <u>à</u> <u>vérifier</u></td><td class="val tint">0</td></tr>
            <tr><th scope="row">9</th><td class="lbl"><u>Pourcentage</u> <u>de</u> <u>pertes</u> par ventilation</td><td class="val">21 %</td></tr>
            <tr><th scope="row">10</th><td class="lbl tint"><u>Puissance</u> <u>installée</u> <u>saisie</u> (kW)</td><td class="val entry">012 kW</td></tr>
            <tr><th scope="row">11</th><td class="lbl"><u>Écart</u> <u>puissance</u> <u>installée</u> / <u>recommandée</u></td><td class="val">003 kW</td></tr>
            <tr><th scope="row">12</th></tr>
            <tr><th scope="row">13</th></tr>
            <tr><th scope="row">14</th><td class="cap text-start"><u>Répartition</u> <u>des</u> <u>déperditions</u></td></tr>
            <tr><th scope="row">15</th><td class="cap"><u>Poste</u></td><td class="cap"><u>Puissance</u> <u>(kW)</u></td></tr>
            <tr><th scope="row">16</th><td class="lbl plain tint"><u>Murs</u></td><td class="val tint">002 kW</td></tr>
            <tr><th scope="row">17</th><td class="lbl plain"><u>Toiture</u></td><td class="val">001 kW</td></tr>
            <tr><th scope="row">18</th><td class="lbl plain tint"><u>Plancher</u></td><td class="val tint">001 kW</td></tr>
            <tr><th scope="row">19</th><td class="lbl plain"><u>Vitrages</u></td><td class="val">002 kW</td></tr>
            <tr><th scope="row">20</th><td class="lbl plain tint"><u>Portes</u></td><td class="val tint">001 kW</td></tr>
            <tr><th scope="row">21</th><td class="lbl plain">Ventilation</td><td class="val">002 kW</td></tr>
            <tr><th scope="row">22</th></tr><tr><th scope="row">23</th></tr><tr><th scope="row">24</th></tr><tr><th scope="row">25</th></tr>
            <tr><th scope="row">26</th></tr><tr><th scope="row">27</th></tr><tr><th scope="row">28</th></tr><tr><th scope="row">29</th></tr>
            <tr><th scope="row">30</th></tr><tr><th scope="row">31</th></tr><tr><th scope="row">32</th></tr><tr><th scope="row">33</th></tr>
            <tr><th scope="row">34</th></tr><tr><th scope="row">35</th></tr><tr><th scope="row">36</th></tr><tr><th scope="row">37</th></tr>
          </tbody>
        </table>

        <svg class="floatchart zones" width="395" height="289" viewBox="1 1 393 287" role="img" aria-label="Déperditions totales par zone">
          <text class="heading" x="197" y="24" text-anchor="middle">Déperditions totales par zone</text>
          <text transform="translate(18 149) rotate(-90)" text-anchor="middle" font-weight="bold">Déperditions (W)</text>
          <path d="M55 37v198M79 37v198M103 37v198M127 37v198M152 37v198M176 37v198M200 37v198M224 37v198M248 37v198M273 37v198M297 37v198M55 235h242" stroke="#a8a8a8" fill="none" shape-rendering="crispEdges"/>
          <path d="M55 220h135M55 222h57M55 224h48M55 226h67M55 228h71M55 230h76M55 232h93M55 234h188" stroke="#5aa9a0" fill="none" shape-rendering="crispEdges"/>
          <path d="M55 221h57M55 225h48M55 227h67M55 229h71M55 231h76M55 233h93" stroke="#bfe0dc" fill="none" shape-rendering="crispEdges"/>
          <path d="M55 218h226" stroke="#10756b" shape-rendering="crispEdges"/>
          <g text-anchor="end"><text x="53" y="221">Véranda</text><text x="53" y="229">Bureau</text><text x="53" y="237">Séjour</text></g>
          <g text-anchor="end">
            <text transform="translate(57 243) rotate(-45)">0 W</text><text transform="translate(81 243) rotate(-45)">000 W</text><text transform="translate(105 243) rotate(-45)">000 W</text><text transform="translate(129 243) rotate(-45)">000 W</text><text transform="translate(154 243) rotate(-45)">000 W</text><text transform="translate(178 243) rotate(-45)">000 W</text><text transform="translate(202 243) rotate(-45)">000 W</text><text transform="translate(226 243) rotate(-45)">000 W</text><text transform="translate(250 243) rotate(-45)">000 W</text><text transform="translate(275 243) rotate(-45)">000 W</text><text transform="translate(299 243) rotate(-45)">000 W</text>
          </g>
          <path d="M309 142h5v5h-5z" fill="#10756b"/><text x="315" y="147">Déperditions totales (W)</text>
        </svg>

        <svg class="floatchart postes" width="312" height="220" viewBox="0 0 310 218" role="img" aria-label="Répartition par poste">
          <text class="heading" x="155" y="21" text-anchor="middle">Répartition par poste</text>
          <g transform="translate(142 138)">
            <path d="M0 0V-77A72 77 0 0 1 70-17z" fill="#4f81bd"/>
            <path d="M0 0 70-17A72 77 0 0 1 69 23z" fill="#c0504d"/>
            <path d="M0 0 69 23A72 77 0 0 1 20 74z" fill="#9bbb59"/>
            <path d="M0 0 20 74A72 77 0 0 1-69 21z" fill="#8064a2"/>
            <path d="M0 0-69 21A72 77 0 0 1-70-17z" fill="#4bacc6"/>
            <path d="M0 0-70-17A72 77 0 0 1 0-77z" fill="#f79646"/>
          </g>
          <path d="M133 104h5v5h-5zM188 57h5v5h-5z" fill="#4f81bd"/>
          <path d="M216 130h5v5h-5z" fill="#c0504d"/><path d="M13 134h5v5h-5z" fill="#4bacc6"/><path d="M42 57h5v5h-5z" fill="#f79646"/>
          <g text-anchor="middle">
            <text><tspan x="72" y="58">Ventilation;</tspan><tspan x="72" y="66">Puissance (kW);</tspan><tspan x="72" y="73">002 kW; 21%</tspan></text>
            <text><tspan x="218" y="58">Murs; Puissance</tspan><tspan x="218" y="65">(kW); 002 kW;</tspan><tspan x="218" y="73">21%</tspan></text>
            <text><tspan x="235" y="124">Toiture;</tspan><tspan x="235" y="132">Puis-</tspan><tspan x="235" y="140">sance</tspan><tspan x="235" y="148">(kW);</tspan><tspan x="235" y="155">001 kW;</tspan><tspan x="235" y="162">9%</tspan></text>
            <text><tspan x="43" y="134">Portes; Puis-</tspan><tspan x="43" y="142">sance (kW); 001</tspan><tspan x="43" y="149">kW; 8%</tspan></text>
            <text x="115" y="164">Vitrages; Puissance</text>
          </g>
          <path d="M265 94h5v5h-5z" fill="#4f81bd"/><path d="M265 104h5v5h-5z" fill="#c0504d"/><path d="M265 114h5v5h-5z" fill="#9bbb59"/><path d="M265 124h5v5h-5z" fill="#8064a2"/><path d="M265 134h5v5h-5z" fill="#4bacc6"/><path d="M265 143h5v5h-5z" fill="#f79646"/>
          <text><tspan x="271" y="98">Murs</tspan><tspan x="271" y="108">Toiture</tspan><tspan x="271" y="118">Plancher</tspan><tspan x="271" y="128">Vitrages</tspan><tspan x="271" y="138">Portes</tspan><tspan x="271" y="148">Ventilation</tspan></text>
        </svg>
      </div>
      <div class="vscroll flex-shrink-0"><div></div></div>
    </div>

    <div class="hscroll d-flex justify-content-between flex-shrink-0"><div class="thumb"></div><div class="grip"></div></div>
    <nav class="tabs d-flex align-items-start flex-shrink-0" aria-label="Sheets">
      <svg width="52" height="12" viewBox="0 0 52 12" fill="none" stroke="#d0cfcd"><path d="M1 2v8M9 2 4 6l5 4M13 4h4v4h-4zM19 4h4v4h-4zM25 4h4v4h-4zM31 4h4v4h-4zM37 4h3v4h-3zM43 2l5 4-5 4M51 2v8"/></svg>
      <button class="addsheet" aria-label="Add sheet"><svg width="5" height="6" viewBox="0 0 5 6"><circle cx="3" cy="3" r="1.500" fill="#fff" stroke="#2a6cab" stroke-width="1.500"/></svg></button>
      <a href="#">Bilan thermique</a><a class="border-0" href="#">Paramètres</a><a class="active" href="#" aria-current="page">Synthèse</a><a href="#">Instructions</a>
    </nav>
  </div>

  <aside class="side d-flex flex-column align-items-center flex-shrink-0" aria-label="Sidebar">
    <button class="btn" aria-label="Sidebar settings"><svg><use href="#i-burger"/></svg></button>
    <button class="btn" aria-label="Properties"><svg><use href="#i-props"/></svg></button>
    <button class="btn" aria-label="Styles"><svg><use href="#i-style"/></svg></button>
    <button class="btn" aria-label="Gallery"><svg><use href="#i-gallery"/></svg></button>
    <button class="btn" aria-label="Navigator"><svg><use href="#i-nav"/></svg></button>
    <button class="btn" aria-label="Functions"><svg><use href="#i-fx"/></svg></button>
    <span class="grabber d-flex align-items-center"><svg width="4" height="4" viewBox="0 0 4 4"><path d="M1 0v4l2-2z" fill="#fff"/></svg></span>
  </aside>
</main>

<footer class="statusbar d-flex flex-shrink-0">
  <div class="s-sheet d-flex align-items-center"><svg width="10" height="10" class="me-2"><use href="#i-disk"/></svg>Sheet 3 of 4</div>
  <div class="s-sel">Selected: 1 row, 10 columns</div>
  <div class="s-page">PageStyle_Synthèse</div>
  <div class="s-lang text-center">English (USA)</div>
  <div class="s-mode d-flex align-items-center justify-content-end"><svg width="18" height="10" viewBox="0 0 18 10" fill="none"><path d="M1 2.500h9v5H1z" stroke="#3a97cc"/><path d="M13 .5h4M15 1v8M13 9.500h4" stroke="#444"/></svg></div>
  <div class="s-sum text-center">Average: ; Sum: 0</div>
  <div class="s-zoom d-flex align-items-center"><button aria-label="Zoom out">−</button><input class="zoomrange" type="range" min="0" max="100" value="50" aria-label="Zoom"><button aria-label="Zoom in">+</button><span class="ps-1">100%</span></div>
</footer>
</body>
</html>
